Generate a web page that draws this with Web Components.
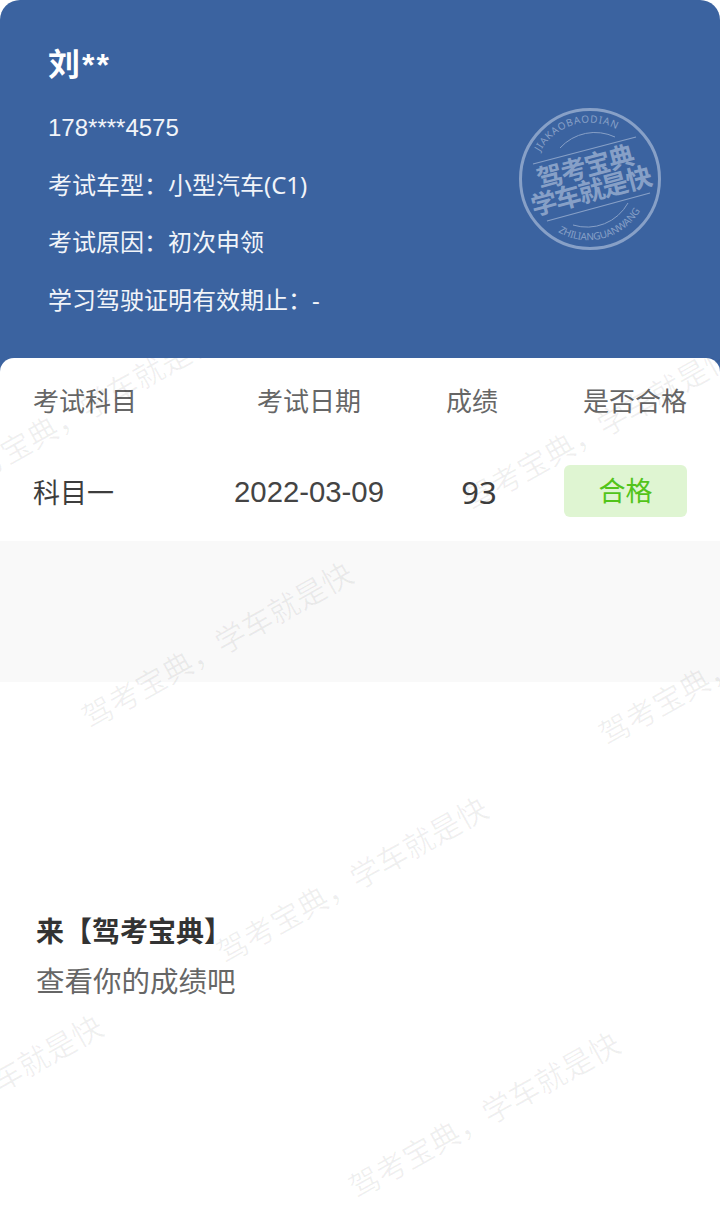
<!DOCTYPE html>
<html lang="zh">
<head>
<meta charset="utf-8">
<title>成绩单</title>
<style>
  html, body { margin: 0; padding: 0; background: #fff; }
  body { font-family: "Noto Sans", "Noto Sans CJK SC", sans-serif; }
</style>
</head>
<body>
<score-page>
  <driver-header slot="header">
    <span slot="name">刘**</span>
    <span slot="phone">178****4575</span>
    <span>考试车型：小型汽车(C1)</span>
    <span>考试原因：初次申领</span>
    <span>学习驾驶证明有效期止：-</span>
  </driver-header>
  <score-table>
    <score-row subject="科目一" date="2022-03-09" score="93" result="合格"></score-row>
  </score-table>
  <promo-note title-text="来【驾考宝典】" sub-text="查看你的成绩吧"></promo-note>
</score-page>

<script>
class DriverStamp extends HTMLElement {
  constructor() {
    super();
    this.attachShadow({mode: "open"}).innerHTML = `
      <style>
        :host { display: block; width: 180px; height: 180px; }
        svg { display: block; }
        text { fill: #87a0c7; font-family: "Noto Sans CJK SC", sans-serif; }
        .en { font-family: "Noto Sans", sans-serif; font-size: 10px; }
        .cn { font-size: 26px; font-weight: 700; }
      </style>
      <svg width="180" height="180" viewBox="0 0 180 180" fill="none" stroke="#87a0c7">
        <circle cx="90" cy="89" r="69.5" stroke-width="3"/>
        <path d="M60 58A47 47 0 0 1 115 47" stroke-width="1"/>
        <path d="M73 135A47 47 0 0 0 128 113" stroke-width="1"/>
        <path d="M33 74L136 47" stroke-width="1.2"/>
        <path d="M47 131L150 103" stroke-width="1.2"/>
        <defs>
          <path id="arc-top" d="M40 62A57 57 0 0 1 118 40"/>
          <path id="arc-bottom" d="M58 142A60 60 0 0 0 142 117"/>
        </defs>
        <text class="en" stroke="none" textLength="88"><textPath href="#arc-top">JIAKAOBAODIAN</textPath></text>
        <text class="en" stroke="none" textLength="94"><textPath href="#arc-bottom">ZHILIANGUANWANG</textPath></text>
        <text class="cn" stroke="none" x="88" y="86" text-anchor="middle" textLength="100" transform="rotate(-15 88 86)">驾考宝典</text>
        <text class="cn" stroke="none" x="94" y="110" text-anchor="middle" textLength="124" transform="rotate(-15 94 110)">学车就是快</text>
      </svg>`;
  }
}
customElements.define("driver-stamp", DriverStamp);

class DriverHeader extends HTMLElement {
  constructor() {
    super();
    this.attachShadow({mode: "open"}).innerHTML = `
      <style>
        :host {
          display: block;
          position: relative;
          z-index: 2;
          height: 378px;
          box-sizing: border-box;
          padding: 37px 0 0 48px;
          background: #3b63a0;
          border-radius: 20px 20px 0 0;
          color: #fff;
          font-size: 24px;
        }
        .name {
          font-family: "Liberation Sans", "Noto Sans CJK SC", sans-serif;
          font-size: 32px;
          line-height: 56px;
          font-weight: 700;
          letter-spacing: 2px;
        }
        .lines { display: flex; flex-direction: column; margin-top: 5px; color: #f1f4f9; }
        .lines ::slotted(*), .phone { line-height: 57.5px; height: 57.5px; }
        .phone { font-family: "Liberation Sans", sans-serif; padding-top: 1px; height: 56.5px; }
        driver-stamp { position: absolute; top: 90px; left: 500px; }
      </style>
      <div class="name"><slot name="name"></slot></div>
      <div class="lines">
        <div class="phone"><slot name="phone"></slot></div>
        <slot></slot>
      </div>
      <driver-stamp></driver-stamp>`;
  }
}
customElements.define("driver-header", DriverHeader);

class ScoreTable extends HTMLElement {
  constructor() {
    super();
    this.attachShadow({mode: "open"}).innerHTML = `
      <style>
        :host {
          display: block;
          position: relative;
          z-index: 3;
          margin-top: -20px;
          background: #fff;
          border-radius: 14px 14px 0 0;
          padding: 0 33px;
          height: 183px;
          box-sizing: border-box;
        }
        .head {
          display: grid;
          grid-template-columns: 164px 224px 102px 1fr;
          align-items: center;
          height: 84px;
          color: #666;
          font-size: 26px;
        }
        .c { text-align: center; }
        .r { text-align: right; }
      </style>
      <div class="head">
        <div>考试科目</div><div class="c">考试日期</div><div class="c">成绩</div><div class="r">是否合格</div>
      </div>
      <slot></slot>`;
  }
}
customElements.define("score-table", ScoreTable);

class ScoreRow extends HTMLElement {
  connectedCallback() {
    if (this.shadowRoot) return;
    this.attachShadow({mode: "open"}).innerHTML = `
      <style>
        :host {
          display: grid;
          grid-template-columns: 164px 224px 102px 1fr;
          align-items: center;
          height: 52px;
          margin-top: 23px;
          color: #3d3d3d;
          font-size: 27px;
        }
        .c { text-align: center; }
        .date { font-family: "Liberation Sans", sans-serif; font-size: 29.3px; padding-top: 2px; color: #444; }
        .score { font-size: 31px; padding: 2px 0 0 14px; }
        .tag {
          justify-self: end;
          width: 123px;
          height: 52px;
          line-height: 52px;
          text-align: center;
          background: #dff5d2;
          color: #52c41a;
          border-radius: 6px;
        }
      </style>
      <div>${this.getAttribute("subject")}</div>
      <div class="c date">${this.getAttribute("date")}</div>
      <div class="c score">${this.getAttribute("score")}</div>
      <div class="tag">${this.getAttribute("result")}</div>`;
  }
}
customElements.define("score-row", ScoreRow);

class PromoNote extends HTMLElement {
  connectedCallback() {
    if (this.shadowRoot) return;
    this.attachShadow({mode: "open"}).innerHTML = `
      <style>
        :host {
          display: block;
          margin-top: 141px;
          padding: 224px 36px 0;
          font-size: 28.5px;
          line-height: 50px;
        }
        .t { font-weight: 700; color: #333; font-size: 28px; }
        .s { color: #666; }
      </style>
      <div class="t">${this.getAttribute("title-text")}</div>
      <div class="s">${this.getAttribute("sub-text")}</div>`;
  }
}
customElements.define("promo-note", PromoNote);

// watermark lattice, start point of every text line
const MARKS = [[-41, 502], [476, 519], [94, 737], [611, 754], [229, 972], [-156, 1190], [361, 1207]];

class WaterMark extends HTMLElement {
  constructor() {
    super();
    const items = MARKS.map(p =>
      `<span style="left:${p[0]}px;top:${p[1] - 40}px">驾考宝典，学车就是快</span>`).join("");
    this.attachShadow({mode: "open"}).innerHTML = `
      <style>
        :host {
          display: block;
          position: absolute;
          inset: 0;
          overflow: hidden;
          pointer-events: none;
          z-index: 4;
        }
        .clip { position: absolute; left: 0; right: 0; top: 358px; bottom: 0; overflow: hidden; }
        .in { position: absolute; left: 0; top: -358px; }
        span {
          position: absolute;
          height: 40px;
          line-height: 40px;
          white-space: nowrap;
          font-size: 30.5px;
          color: rgba(0, 0, 0, .06);
          transform-origin: 0 100%;
          transform: rotate(-29.4deg);
        }
      </style>
      <div class="clip"><div class="in">${items}</div></div>`;
  }
}
customElements.define("water-mark", WaterMark);

class ScorePage extends HTMLElement {
  constructor() {
    super();
    this.attachShadow({mode: "open"}).innerHTML = `
      <style>
        :host {
          display: block;
          position: relative;
          height: 1228px;
          overflow: hidden;
          background: #fff;
          font-family: "Noto Sans", "Noto Sans CJK SC", sans-serif;
        }
        .strip { position: absolute; left: 0; right: 0; top: 541px; height: 141px; background: #f9f9f9; }
      </style>
      <slot name="header"></slot>
      <div class="strip"></div>
      <slot></slot>
      <water-mark></water-mark>`;
  }
}
customElements.define("score-page", ScorePage);
</script>
</body>
</html>
